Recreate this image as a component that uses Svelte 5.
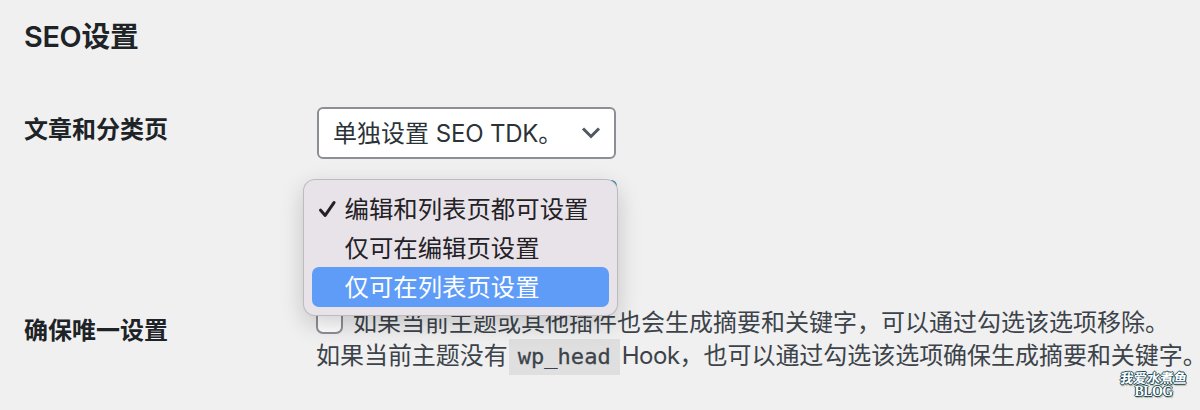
<script lang="ts">
	let selected = $state(0);
	let active = $state(2);
	let unique = $state(false);

	const options = ['编辑和列表页都可设置', '仅可在编辑页设置', '仅可在列表页设置'];
</script>

<main>
	<h2>SEO设置</h2>

	<div class="row posts">
		<div class="label">文章和分类页</div>
		<div class="field">
			<button class="select">
				<span>单独设置 <i>SEO TDK</i>。</span>
				<svg width="20" height="14" viewBox="0 0 20 14">
					<path d="M2 2.5l8 8 8-8" fill="none" stroke="#50575e" stroke-width="3" />
				</svg>
			</button>
			<div class="select behind"></div>
			<ul class="menu" role="listbox">
				{#each options as option, index}
					<li
						role="option"
						aria-selected={index === selected}
						class:active={index === active}
						onmouseenter={() => (active = index)}
					>
						<span class="check">
							{#if index === selected}
								<svg width="18" height="18" viewBox="0 0 18 18">
									<path
										d="M2.6 10.2l4.6 5.2L16 2.6"
										fill="none"
										stroke="#232126"
										stroke-width="3"
										stroke-linecap="round"
										stroke-linejoin="round"
									/>
								</svg>
							{/if}
						</span>
						<span class="text">{option}</span>
					</li>
				{/each}
			</ul>
		</div>
	</div>

	<div class="row unique">
		<div class="label">确保唯一设置</div>
		<div class="field description">
			<label>
				<input type="checkbox" bind:checked={unique} />
				<span>如果当前主题或其他插件也会生成摘要和关键字，可以通过勾选该选项移除。</span>
			</label>
			<p>如果当前主题没有<code>wp_head</code><i>Hook</i>，也可以通过勾选该选项确保生成摘要和关键字。</p>
		</div>
	</div>

	<div class="watermark">
		<span>我爱水煮鱼</span>
		<b>BLOG</b>
	</div>
</main>

<style>
	:global(body) {
		margin: 0;
		background: #f0f0f0;
	}

	main {
		position: relative;
		box-sizing: border-box;
		width: 1200px;
		height: 410px;
		padding: 16px 0 0 24px;
		overflow: hidden;
		color: #1d2327;
		font-family: Inter, 'Noto Sans CJK SC', sans-serif;
		font-size: 24px;
		white-space: nowrap;
	}

	h2 {
		margin: 0;
		font-size: 28.8px;
		line-height: 41px;
		font-weight: 600;
		letter-spacing: -0.3px;
	}

	i {
		font-style: normal;
		letter-spacing: -0.5px;
	}

	.row {
		display: flex;
	}

	.posts {
		height: 197px;
		padding-top: 50px;
	}

	.label {
		width: 293px;
		flex: none;
		padding-top: 4px;
		line-height: 38px;
		font-weight: 600;
	}

	.unique .label {
		padding-top: 8px;
	}

	.field {
		position: relative;
		display: flex;
		flex-direction: column;
		align-items: flex-start;
		gap: 21px;
	}

	.select {
		display: flex;
		align-items: center;
		justify-content: space-between;
		box-sizing: border-box;
		width: 299px;
		height: 52px;
		padding: 0 13px 0 14px;
		border: 2px solid #8c8f94;
		border-radius: 6px;
		background: #fff;
		color: #2c3338;
		font: inherit;
	}

	.select span {
		padding-bottom: 4px;
	}

	.select i {
		letter-spacing: -0.2px;
	}

	.behind {
		width: 300px;
		border-color: #2271b1;
	}

	.menu {
		position: absolute;
		z-index: 1;
		top: 73px;
		left: -13px;
		box-sizing: border-box;
		width: 313px;
		height: 135px;
		margin: 0;
		padding: 9px 8px 8px;
		border-radius: 11px;
		background: #e8e3e9;
		box-shadow:
			0 0 0 1px #bdbbbe,
			0 8px 24px rgba(0, 0, 0, 0.2);
		list-style: none;
		color: #232126;
		font-size: 24.4px;
	}

	li {
		display: flex;
		align-items: center;
		height: 39.2px;
		border-radius: 7px;
	}

	li.active {
		background: #5e9cf8;
		color: #fff;
	}

	.text {
		padding-bottom: 3px;
	}

	.check {
		display: flex;
		width: 26.5px;
		padding-left: 6px;
	}

	.description {
		gap: 0;
		color: #3c434a;
	}

	label {
		display: flex;
		align-items: center;
		height: 33px;
	}

	label span {
		padding-bottom: 1px;
	}

	input {
		appearance: none;
		box-sizing: border-box;
		width: 27px;
		height: 27px;
		margin: 0 10px 0 -1px;
		border: 2px solid #8c8f94;
		border-radius: 7px;
		background: #fff;
	}

	p {
		margin: 0 0 0 -1px;
		line-height: 37px;
		letter-spacing: -0.04px;
	}

	code {
		margin: 0 2px 0 1px;
		padding: 5px 9px 6px;
		background: #dfdfdf;
		font-family: 'DejaVu Sans Mono', monospace;
		font-size: 22px;
		letter-spacing: 0.05px;
		-webkit-text-stroke: 0.3px;
	}

	.watermark {
		position: absolute;
		top: 372px;
		left: 1120px;
		display: flex;
		flex-direction: column;
		align-items: center;
		color: #fff;
		font-family: 'Liberation Serif', 'Noto Sans CJK SC', serif;
		font-size: 13.4px;
		line-height: 14px;
		font-weight: 700;
		text-shadow:
			1px 0 #17485a,
			-1px 0 #17485a,
			0 1px #17485a,
			0 -1px #17485a,
			1px 2px 1px #b9b49a;
	}

	.watermark span {
		transform: skewX(-8deg);
	}

	.watermark b {
		font-size: 14px;
		line-height: 11px;
		letter-spacing: -0.6px;
	}
</style>
